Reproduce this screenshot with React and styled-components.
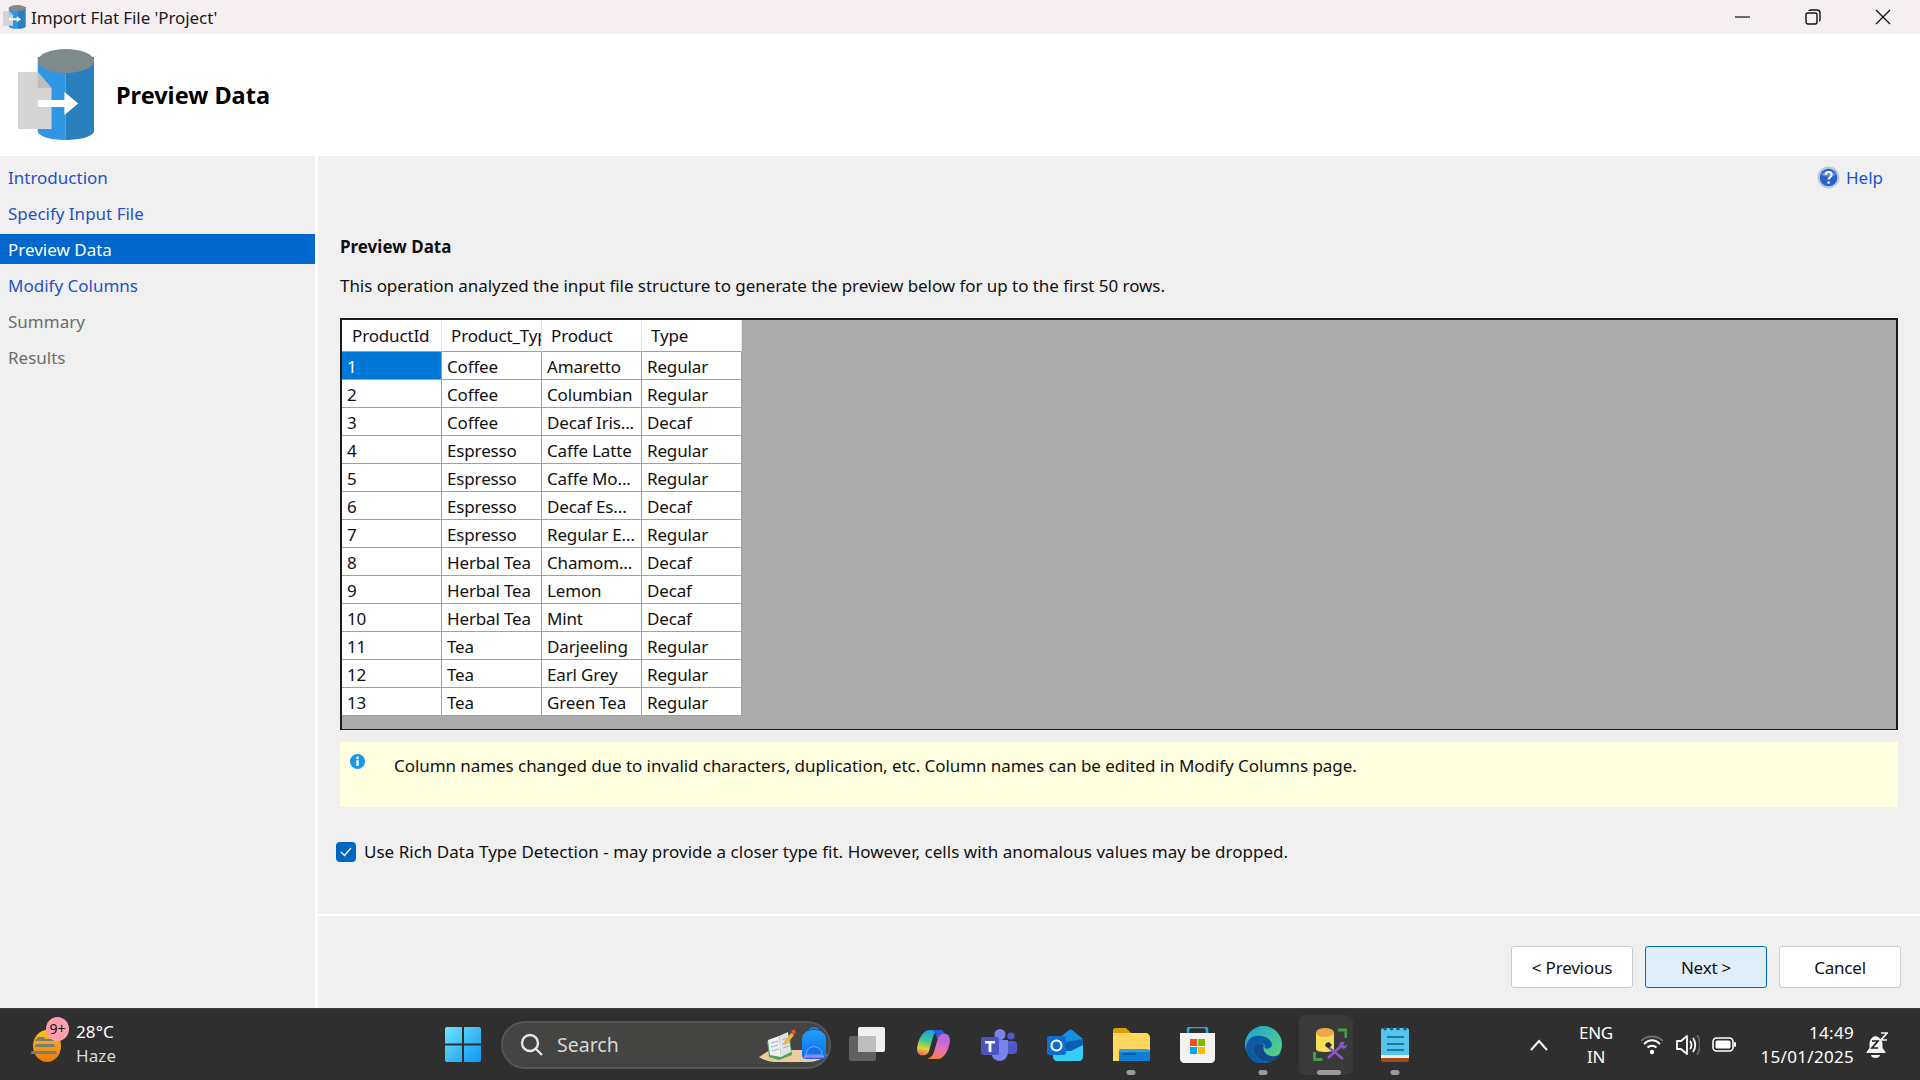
import React from "react";
import styled, { createGlobalStyle } from "styled-components";

const GlobalStyle = createGlobalStyle`
  html, body { margin: 0; padding: 0; background: #f0f0f0; }
  * { box-sizing: border-box; }
`;

const font = `"Noto Sans", "Open Sans", sans-serif`;

const Page = styled.div`
  width: 1920px;
  height: 1080px;
  display: flex;
  flex-direction: column;
  overflow: hidden;
  font-family: ${font};
  font-size: 17px;
  color: #111;
`;

const TitleBar = styled.div`
  height: 34px;
  background: #f6eff2;
  display: flex;
  align-items: center;
  padding-left: 3px;
  gap: 5px;
  font-size: 17px;
`;

const TitleText = styled.span`
  flex: 1;
  color: #1a1a1a;
  letter-spacing: -0.08px;
`;

const WindowButtons = styled.div`
  display: flex;
  align-items: center;
  gap: 54px;
  padding-right: 29px;
`;

const Header = styled.div`
  height: 122px;
  background: #fff;
  display: flex;
  align-items: center;
  padding-left: 18px;
  gap: 21px;
`;

const HeaderTitle = styled.h1`
  margin: 0 0 1px;
  font-size: 23.5px;
  font-weight: 700;
  color: #000;
`;

const Body = styled.div`
  flex: 1;
  display: flex;
  min-height: 0;
`;

const Sidebar = styled.nav`
  width: 318px;
  border-right: 3px solid #fff;
  background: #f0f0f0;
  display: flex;
  flex-direction: column;
  gap: 6px;
  padding-top: 6px;
`;

const NavItem = styled.div`
  height: 30px;
  display: flex;
  align-items: center;
  padding: 1px 0 0 8px;
  font-size: 17px;
  color: ${(p) => (p.$active ? "#fff" : p.$disabled ? "#6d6d6d" : "#2450c8")};
  background: ${(p) => (p.$active ? "#0067cc" : "transparent")};
`;

const Main = styled.main`
  flex: 1;
  display: flex;
  flex-direction: column;
  min-width: 0;
`;

const Content = styled.div`
  flex: 1;
  padding: 8px 22px 0;
  display: flex;
  flex-direction: column;
`;

const HelpRow = styled.div`
  display: flex;
  justify-content: flex-end;
  align-items: center;
  gap: 6px;
  height: 26px;
  padding-right: 15px;
  font-size: 17px;
  color: #1a55d0;
`;

const SectionTitle = styled.h2`
  margin: 45px 0 0;
  height: 24px;
  line-height: 24px;
  font-size: 17px;
  font-weight: 700;
  color: #111;
`;

const Description = styled.p`
  margin: 15px 0 0;
  height: 24px;
  line-height: 24px;
  font-size: 17px;
  letter-spacing: -0.055px;
  color: #111;
`;

const GridFrame = styled.div`
  margin-top: 20px;
  height: 412px;
  border: 2px solid #1c1c1c;
  border-bottom-width: 1px;
  background: #ababab;
  overflow: hidden;
`;

const Table = styled.table`
  border-collapse: separate;
  border-spacing: 0;
  table-layout: fixed;
  width: 400px;
  font-size: 17px;
  letter-spacing: -0.15px;
`;

const HeadCell = styled.th`
  width: 100px;
  height: 32px;
  padding: 0 0 0 9px;
  background: #fff;
  font-weight: 400;
  text-align: left;
  white-space: nowrap;
  overflow: hidden;
  border-right: 1px solid #e4e4e4;
  border-bottom: 1px solid #a0a0a0;

  &:first-child {
    padding-left: 10px;
  }
`;

const Cell = styled.td`
  width: 100px;
  height: 28px;
  padding: 1px 0 0 5px;
  background: ${(p) => (p.$selected ? "#0078d7" : "#fff")};
  color: ${(p) => (p.$selected ? "#fff" : "#111")};
  white-space: nowrap;
  overflow: hidden;
  border-right: 1px solid #a0a0a0;
  border-bottom: 1px solid #a0a0a0;
`;

const InfoBox = styled.div`
  margin-top: 12px;
  height: 65px;
  background: #ffffe0;
  display: flex;
  padding: 12px 0 0 10px;
  gap: 29px;
`;

const InfoText = styled.span`
  font-size: 17px;
  letter-spacing: -0.06px;
  line-height: 24px;
`;

const CheckRow = styled.label`
  margin: 33px 0 0 -4px;
  display: flex;
  align-items: center;
  gap: 8px;
  font-size: 17px;
  letter-spacing: 0.025px;
`;

const CheckBox = styled.span`
  width: 20px;
  height: 20px;
  border-radius: 4px;
  background: #0067c0;
  display: flex;
  align-items: center;
  justify-content: center;
`;

const Footer = styled.div`
  height: 94px;
  border-top: 2px solid #fff;
  display: flex;
  justify-content: flex-end;
  gap: 12px;
  padding: 30px 19px 0 0;
`;

const Button = styled.div`
  width: 122px;
  height: 42px;
  border-radius: 3px;
  border: 1px solid ${(p) => (p.$primary ? "#0067c0" : "#cccccc")};
  background: ${(p) => (p.$primary ? "#e0eef9" : "#fff")};
  display: flex;
  align-items: center;
  justify-content: center;
  font-size: 17px;
  letter-spacing: -0.2px;
  color: #111;
`;

const Taskbar = styled.footer`
  height: 72px;
  background: #302f2f;
  border-top: 1px solid #3c3c3c;
  display: flex;
  align-items: center;
  color: #fff;
  font-size: 17px;
`;

const Weather = styled.div`
  width: 430px;
  display: flex;
  align-items: center;
  padding-left: 29px;
`;

const WeatherIconWrap = styled.div`
  position: relative;
  width: 47px;
  height: 36px;
`;

const Badge = styled.span`
  position: absolute;
  left: 17px;
  top: -10px;
  width: 23px;
  height: 24px;
  border-radius: 50%;
  background: #ff9fae;
  color: #111;
  font-size: 14px;
  line-height: 24px;
  text-align: center;
`;

const WeatherText = styled.div`
  display: flex;
  flex-direction: column;
  line-height: 24px;
  font-size: 17px;
  margin-top: -2px;
  letter-spacing: 0.1px;
`;

const Muted = styled.span`
  color: #d8d8d8;
`;

const IconSlot = styled.div`
  position: relative;
  width: 66px;
  height: 60px;
  display: flex;
  align-items: center;
  justify-content: center;
  flex-shrink: 0;
`;

const ActiveSlot = styled(IconSlot)`
  width: 50px;
  margin: 0 13px 0 3px;
  padding-left: 12px;
  background: #3a3a3a;
  border-radius: 6px;
  box-shadow: 5px 0 0 -1px #393939;
`;

const RunDot = styled.span`
  position: absolute;
  bottom: 0;
  left: ${(p) => (p.$wide ? "60%" : "50%")};
  transform: translateX(-50%);
  width: ${(p) => (p.$wide ? "24px" : "9px")};
  height: 5px;
  border-radius: 3px;
  background: #9b9b9b;
`;

const SearchPill = styled.div`
  width: 330px;
  height: 48px;
  margin: 0 3px 0 5px;
  border-radius: 24px;
  background: #444443;
  border: 2px solid #565655;
  display: flex;
  align-items: center;
  padding-left: 17px;
  gap: 13px;
  flex-shrink: 0;
  color: #d8d8d8;
  font-size: 19.5px;
`;

const SearchLabel = styled.span`
  flex: 1;
`;

const Tray = styled.div`
  margin-left: 102px;
  display: flex;
  align-items: center;
`;

const Lang = styled.div`
  margin-left: 30px;
  width: 36px;
  display: flex;
  flex-direction: column;
  align-items: center;
  line-height: 24px;
  font-size: 17px;
  letter-spacing: -0.3px;
`;

const TrayIcons = styled.div`
  margin-left: 26px;
  display: flex;
  align-items: center;
  gap: 12px;
`;

const Clock = styled.div`
  margin-left: 14px;
  width: 104px;
  display: flex;
  flex-direction: column;
  align-items: flex-end;
  line-height: 24px;
  font-size: 17px;
  letter-spacing: 0.3px;
`;

const BellWrap = styled.div`
  margin-left: 12px;
  display: flex;
`;

function DbIcon({ width, height }) {
  return (
    <svg width={width} height={height} viewBox="0 0 78 92" preserveAspectRatio="none">
      <path d="M20 8 v74 c0 5 12 9 28 9 V8z" fill="#2e96e2" />
      <path d="M48 8 v83 c16 0 29-4 29-9 V8z" fill="#2980bd" />
      <ellipse cx="48.5" cy="12" rx="28.5" ry="12" fill="#7f8b8b" />
      <path d="M0 23 h20 l14 16 v41 H0z" fill="#d4d4d4" />
      <path d="M20 23 l14 16 H20z" fill="#bdbdbd" />
      <path d="M20 51 h27 v-8 l14 11.5 -14 11.5 v-8 H20z" fill="#fff" />
    </svg>
  );
}

function HelpIcon() {
  return (
    <svg width="23" height="23" viewBox="0 0 23 23">
      <circle cx="11.5" cy="11.5" r="11" fill="#b9c8e0" />
      <circle cx="11.5" cy="11.5" r="8.8" fill="#2a62c9" />
      <path d="M4 9 a8 6 0 0 1 15 0 a12 6 0 0 1 -15 0z" fill="#6f9ae6" opacity=".8" />
      <path d="M8.6 9 c0-4 6-4 6 0 c0 2.4-3 2.4-3 4.6" fill="none" stroke="#fff" strokeWidth="2" />
      <circle cx="11.6" cy="16.6" r="1.3" fill="#fff" />
    </svg>
  );
}

function InfoIcon() {
  return (
    <svg width="15" height="15" viewBox="0 0 15 15" style={{ flexShrink: 0 }}>
      <circle cx="7.5" cy="7.5" r="7.5" fill="#1b95e6" />
      <rect x="6.3" y="6.3" width="2.4" height="5.6" fill="#fff" />
      <circle cx="7.5" cy="4" r="1.4" fill="#fff" />
    </svg>
  );
}

function WeatherIcon() {
  return (
    <svg width="32" height="34" viewBox="0 0 32 34" style={{ position: "absolute", left: 2, top: 2 }}>
      <defs>
        <linearGradient id="sun" x1="0" y1="0" x2="0" y2="1">
          <stop offset="0" stopColor="#fbc21a" />
          <stop offset="1" stopColor="#ee7a0c" />
        </linearGradient>
      </defs>
      <ellipse cx="16" cy="17" rx="14" ry="16" fill="url(#sun)" />
      <g fill="#7b7b78">
        <rect x="6" y="8" width="8" height="3" rx="1.5" />
        <rect x="4" y="15" width="20" height="3" rx="1.5" />
        <rect x="0" y="22" width="26" height="3" rx="1.5" />
        <rect x="4" y="10" width="20" height="2" rx="1" />
      </g>
    </svg>
  );
}

function WinLogo() {
  return (
    <svg width="36" height="35" viewBox="0 0 36 35">
      <defs>
        <linearGradient id="win" x1="0" y1="0" x2="1" y2="1">
          <stop offset="0" stopColor="#6fe2fc" />
          <stop offset="1" stopColor="#0f97f2" />
        </linearGradient>
      </defs>
      <path d="M2 0 h15 v16.5 H0 V2 a2 2 0 0 1 2-2z M19 0 h15 a2 2 0 0 1 2 2 v14.5 H19z M0 18.5 h17 V35 H2 a2 2 0 0 1-2-2z M19 18.5 h17 V33 a2 2 0 0 1-2 2 H19z" fill="url(#win)" />
    </svg>
  );
}

function SearchGlass() {
  return (
    <svg width="24" height="24" viewBox="0 0 24 24" fill="none" stroke="#e6e6e6" strokeWidth="2.4">
      <circle cx="10" cy="10" r="8" />
      <path d="M16 16 l6 6" />
    </svg>
  );
}

function SchoolArt() {
  return (
    <svg width="70" height="36" viewBox="0 0 70 36">
      <defs>
        <linearGradient id="bag" x1="0" y1="0" x2="0" y2="1">
          <stop offset="0" stopColor="#22a0f8" />
          <stop offset="1" stopColor="#0b6cf0" />
        </linearGradient>
      </defs>
      <path d="M0 30 L11 23 H58 L68 28 C64 32 56 35 50 35 H16 C10 35 4 33 0 30z" fill="#eecb9c" />
      <path d="M8 14 L10 30 L20 33 L33 28 L31 11z" fill="#4aa35a" />
      <path d="M9 13 L20 9 L22 30 L11 28z" fill="#eef1f1" />
      <path d="M20 9 L29 5 L32 25 L22 30z" fill="#dfe3e8" />
      <g stroke="#a9b0b5" strokeWidth="1">
        <path d="M12 16 l7-2 M12 20 l7-2 M13 24 l7-2" />
        <path d="M23 13 l5-2 M23 17 l6-2 M24 21 l6-2" />
      </g>
      <path d="M25 15 L32 6 L35 8 L28 17 L24 18z" fill="#f2b33d" />
      <circle cx="34.5" cy="5" r="2.2" fill="#e8523a" />
      <path d="M43 28 V13 C43 6 48 3 55 3 s12 3 12 10 v15 c0 3-2 4-5 4 H48 c-3 0-5-1-5-4z" fill="url(#bag)" />
      <path d="M51 4 c0-4 8-4 8 0" fill="none" stroke="#1277ee" strokeWidth="2.5" />
      <path d="M47 28 c0-11 16-11 16 0z" fill="#1a6fe8" stroke="#7cc4ff" strokeWidth="0.8" />
      <path d="M45 29.5 h20" stroke="#a78bfa" strokeWidth="2.2" />
    </svg>
  );
}

function TaskViewIcon() {
  return (
    <svg width="36" height="35" viewBox="0 0 36 35">
      <rect x="0" y="9" width="27" height="25" rx="2" fill="#606060" />
      <rect x="9" y="0" width="27" height="25" rx="2" fill="#f0f0f0" />
      <rect x="9" y="9" width="18" height="16" rx="1" fill="#bdbdbd" />
    </svg>
  );
}

function CopilotIcon() {
  return (
    <svg width="33" height="31" viewBox="0 0 34 32">
      <defs>
        <linearGradient id="copA" x1="0.5" y1="0" x2="0.3" y2="1">
          <stop offset="0" stopColor="#1a9fe8" />
          <stop offset=".45" stopColor="#43c98a" />
          <stop offset=".75" stopColor="#e8d030" />
          <stop offset="1" stopColor="#e86a6a" />
        </linearGradient>
        <linearGradient id="copB" x1="0.6" y1="0" x2="0.4" y2="1">
          <stop offset="0" stopColor="#a869ea" />
          <stop offset=".6" stopColor="#e86dc0" />
          <stop offset="1" stopColor="#f9803a" />
        </linearGradient>
      </defs>
      <path d="M13 1 H24 C19 2 17 6 16 10 L12 24 C11 26 9 27 7 27 H5 C2 27 0 24 0 20 C1 11 6 1 13 1z" fill="url(#copA)" />
      <path d="M21 31 H10 C15 30 17 26 18 22 L22 8 C23 6 25 5 27 5 H29 C32 5 34 8 34 12 C33 21 28 31 21 31z" fill="url(#copB)" />
      <path d="M15 1 h9 c2 0 4 2 5 4 h-2 c-3 0-4 1-5 3 l-1 3 c-1-4-2-9-6-10z" fill="#2a5fdc" />
    </svg>
  );
}

function TeamsIcon() {
  return (
    <svg width="36" height="32" viewBox="0 0 36 32">
      <circle cx="19" cy="5.5" r="5.5" fill="#7b83eb" />
      <circle cx="30" cy="7" r="3.6" fill="#5059c9" />
      <rect x="25" y="12" width="11" height="13" rx="4" fill="#5059c9" />
      <path d="M10 11 h17 v12 c0 5-4 9-8.5 9 S10 28 10 23z" fill="#7b83eb" />
      <rect x="0" y="8" width="18" height="18" rx="2" fill="#4b53bc" />
      <path d="M4 12 h10 v2.4 h-3.6 V23 H7.6 v-8.6 H4z" fill="#fff" />
    </svg>
  );
}

function OutlookIcon() {
  return (
    <svg width="36" height="32" viewBox="0 0 36 32">
      <path d="M6 14 L22 1 c1-1 2-1 3 0 l11 9 v18 c0 2-2 4-4 4 H10 c-2 0-4-2-4-4z" fill="#1490df" />
      <path d="M14 14 L36 10 V18 L24 26 H14z" fill="#0a5fb4" />
      <path d="M6 22 L24 22 36 16 V28 c0 2-2 4-4 4 H10 c-2 0-4-2-4-4z" fill="#35cdf2" />
      <rect x="0" y="7" width="19" height="19" rx="2" fill="#0c6fd0" />
      <circle cx="9.5" cy="16.5" r="5" fill="none" stroke="#fff" strokeWidth="2.2" />
    </svg>
  );
}

function ExplorerIcon() {
  return (
    <svg width="37" height="33" viewBox="0 0 37 33">
      <path d="M0 2 c0-1 1-2 2-2 h11 l5 5 h-18z" fill="#d9a108" />
      <path d="M0 5 h33 c2 0 4 2 4 4 v24 H0z" fill="#ffd75e" />
      <path d="M6 22 h31 v11 H6z" fill="#0f7fd4" />
      <path d="M6 22 c0-1 1-1 2-1 h26 c2 0 3 1 3 3 H6z" fill="#2da0ea" />
      <rect x="10" y="25" width="13" height="2" fill="#0a5aa8" />
    </svg>
  );
}

function StoreIcon() {
  return (
    <svg width="35" height="36" viewBox="0 0 35 36">
      <path d="M8 8 V3 c0-2 1-3 3-3 h13 c2 0 3 1 3 3 v5" fill="none" stroke="#2aa7e0" strokeWidth="2.5" />
      <path d="M0 6 h35 v26 c0 2-2 4-4 4 H4 c-2 0-4-2-4-4z" fill="#f3f3f3" />
      <rect x="10" y="12" width="7" height="7" fill="#f25022" />
      <rect x="18" y="12" width="7" height="7" fill="#7fba00" />
      <rect x="10" y="20" width="7" height="7" fill="#00a4ef" />
      <rect x="18" y="20" width="7" height="7" fill="#ffb900" />
    </svg>
  );
}

function EdgeIcon() {
  return (
    <svg width="37" height="37" viewBox="0 0 37 37">
      <defs>
        <linearGradient id="edgeA" x1="0" y1="0" x2="1" y2="1">
          <stop offset="0" stopColor="#1c9fdc" />
          <stop offset="1" stopColor="#5fdc70" />
        </linearGradient>
      </defs>
      <circle cx="18.5" cy="18.5" r="18.5" fill="url(#edgeA)" />
      <path d="M1 22 C2 10 12 8 20 11 c6 2 9 8 5 11 c-3 2-7 0-5-3 C12 14 6 20 9 27 c2 5 8 9 15 9 C12 41 2 34 1 22z" fill="#0c59a4" />
      <path d="M24 36 c6-1 11-5 13-10 c-2 3-7 5-11 4 c-5-1-9-5-7-11 C12 14 6 20 9 27 c2 5 8 9 15 9z" fill="#114a8b" />
    </svg>
  );
}

function SsmsIcon() {
  return (
    <svg width="34" height="33" viewBox="0 0 34 33">
      <path d="M25 2 h8 v8" stroke="#3fa046" strokeWidth="3" fill="none" />
      <path d="M1.5 24 v7.5 h8" stroke="#3fa046" strokeWidth="3" fill="none" />
      <path d="M3 4 v17 c0 2 4 3 9 3 s9-1 9-3 V4z" fill="#f6de55" />
      <ellipse cx="12" cy="4.5" rx="9" ry="4.5" fill="#eda848" />
      <path d="M15 30 L29 17 M14 18 L30 31" stroke="#8a58c6" strokeWidth="2.6" />
      <path d="M27 19 c-2-4 1-6 5-5 l-2 3 2 1 2-2 c0 4-3 6-6 4z" fill="#8a58c6" />
      <path d="M13 15 l3-1 3 3 -3 3 -4-2z" fill="#2e2e2e" />
    </svg>
  );
}

function NotepadIcon() {
  return (
    <svg width="28" height="35" viewBox="0 0 28 35">
      <path d="M0 3 c0-1 1-2 2-2 h24 c1 0 2 1 2 2 v25 H0z" fill="#58c4ec" />
      <g fill="#14608c">
        <circle cx="4" cy="1.8" r="1.8" />
        <circle cx="10.5" cy="1.8" r="1.8" />
        <circle cx="17" cy="1.8" r="1.8" />
        <circle cx="24" cy="1.8" r="1.8" />
      </g>
      <path d="M6 10 h17 M6 17 h17 M6 23 h17" stroke="#0d7ea6" strokeWidth="2.2" />
      <rect x="0" y="28" width="28" height="3" fill="#ececec" />
      <path d="M0 31 h28 v2 c0 1-1 2-2 2 H2 c-1 0-2-1-2-2z" fill="#a14f14" />
    </svg>
  );
}

function Chevron() {
  return (
    <svg width="18" height="12" viewBox="0 0 18 12" fill="none" stroke="#fff" strokeWidth="2">
      <path d="M1 11 l8-9 8 9" />
    </svg>
  );
}

function WifiIcon() {
  return (
    <svg width="24" height="20" viewBox="0 0 24 20" fill="none" strokeWidth="2">
      <path d="M1 6 C7 0 17 0 23 6" stroke="#6d6d6d" />
      <path d="M4 9 C9 4 15 4 20 9" stroke="#fff" />
      <path d="M7.5 12.5 C10 10 14 10 16.5 12.5" stroke="#fff" />
      <circle cx="12" cy="17" r="2.2" fill="#fff" stroke="none" />
    </svg>
  );
}

function SpeakerIcon() {
  return (
    <svg width="24" height="24" viewBox="0 0 24 24" fill="none" strokeWidth="1.8">
      <path d="M1 8 h4 l6-5 v18 l-6-5 H1z" stroke="#fff" strokeLinejoin="round" />
      <path d="M14 8 c2 2 2 6 0 8" stroke="#fff" />
      <path d="M17 5 c3 4 3 10 0 14" stroke="#fff" />
      <path d="M21 2 c4 6 4 14 0 20" stroke="#666" />
    </svg>
  );
}

function BatteryIcon() {
  return (
    <svg width="24" height="15" viewBox="0 0 24 15">
      <rect x="1" y="1" width="20" height="13" rx="3.5" fill="none" stroke="#fff" strokeWidth="1.6" />
      <rect x="3.5" y="3.5" width="15" height="8" rx="1.5" fill="#fff" />
      <rect x="22" y="5" width="2" height="5" rx="1" fill="#fff" />
    </svg>
  );
}

function BellIcon() {
  return (
    <svg width="22" height="26" viewBox="0 0 22 26">
      <path d="M9.5 4 c-4 1-6 4-6 8 v4 l-3 4 v1 h19 v-1 l-3-4 v-4 c0-4-3-7-7-8z" fill="#f2f2f2" />
      <path d="M5 23 h9 c0 4-9 4-9 0z" fill="#f2f2f2" />
      <path d="M6 9 h6 l-6 7 h6" fill="none" stroke="#222" strokeWidth="1.7" />
      <path d="M15 1 h6 l-6 7 h6" fill="none" stroke="#f2f2f2" strokeWidth="1.7" />
    </svg>
  );
}

const navItems = [
  { label: "Introduction" },
  { label: "Specify Input File" },
  { label: "Preview Data", active: true },
  { label: "Modify Columns" },
  { label: "Summary", disabled: true },
  { label: "Results", disabled: true },
];

const rows = [
  ["1", "Coffee", "Amaretto", "Regular"],
  ["2", "Coffee", "Columbian", "Regular"],
  ["3", "Coffee", "Decaf Iris...", "Decaf"],
  ["4", "Espresso", "Caffe Latte", "Regular"],
  ["5", "Espresso", "Caffe Mo...", "Regular"],
  ["6", "Espresso", "Decaf Es...", "Decaf"],
  ["7", "Espresso", "Regular E...", "Regular"],
  ["8", "Herbal Tea", "Chamom...", "Decaf"],
  ["9", "Herbal Tea", "Lemon", "Decaf"],
  ["10", "Herbal Tea", "Mint", "Decaf"],
  ["11", "Tea", "Darjeeling", "Regular"],
  ["12", "Tea", "Earl Grey", "Regular"],
  ["13", "Tea", "Green Tea", "Regular"],
];

const columns = ["ProductId", "Product_Type", "Product", "Type"];

export default function App() {
  return (
    <Page>
      <GlobalStyle />
      <TitleBar>
        <DbIcon width={23} height={24} />
        <TitleText>Import Flat File 'Project'</TitleText>
        <WindowButtons>
          <svg width="16" height="16" viewBox="0 0 16 16" stroke="#111" strokeWidth="1.2">
            <path d="M0 8 h15" />
          </svg>
          <svg width="16" height="16" viewBox="0 0 16 16" fill="none" stroke="#111" strokeWidth="1.4">
            <rect x="1" y="4" width="11" height="11" rx="2" />
            <path d="M4 2 c0-1 1-1 2-1 h6 c2 0 3 1 3 3 v6 c0 1 0 2-1 2" />
          </svg>
          <svg width="16" height="16" viewBox="0 0 16 16" stroke="#111" strokeWidth="1.3">
            <path d="M1 1 l14 14 M15 1 L1 15" />
          </svg>
        </WindowButtons>
      </TitleBar>

      <Header>
        <DbIcon width={77} height={92} />
        <HeaderTitle>Preview Data</HeaderTitle>
      </Header>

      <Body>
        <Sidebar>
          {navItems.map((item) => (
            <NavItem key={item.label} $active={item.active} $disabled={item.disabled}>
              {item.label}
            </NavItem>
          ))}
        </Sidebar>
        <Main>
          <Content>
            <HelpRow>
              <HelpIcon />
              Help
            </HelpRow>
            <SectionTitle>Preview Data</SectionTitle>
            <Description>
              This operation analyzed the input file structure to generate the preview below for up to the first 50 rows.
            </Description>
            <GridFrame>
              <Table>
                <thead>
                  <tr>
                    {columns.map((c) => (
                      <HeadCell key={c}>{c}</HeadCell>
                    ))}
                  </tr>
                </thead>
                <tbody>
                  {rows.map((row, r) => (
                    <tr key={row[0]}>
                      {row.map((v, c) => (
                        <Cell key={c} $selected={r === 0 && c === 0}>
                          {v}
                        </Cell>
                      ))}
                    </tr>
                  ))}
                </tbody>
              </Table>
            </GridFrame>
            <InfoBox>
              <InfoIcon />
              <InfoText>
                Column names changed due to invalid characters, duplication, etc. Column names can be edited in Modify Columns page.
              </InfoText>
            </InfoBox>
            <CheckRow>
              <CheckBox>
                <svg width="12" height="10" viewBox="0 0 12 10" fill="none" stroke="#fff" strokeWidth="1.2">
                  <path d="M1 5 l3.5 3.5 L11 1" />
                </svg>
              </CheckBox>
              Use Rich Data Type Detection - may provide a closer type fit. However, cells with anomalous values may be dropped.
            </CheckRow>
          </Content>
          <Footer>
            <Button>&lt; Previous</Button>
            <Button $primary>Next &gt;</Button>
            <Button>Cancel</Button>
          </Footer>
        </Main>
      </Body>

      <Taskbar>
        <Weather>
          <WeatherIconWrap>
            <WeatherIcon />
            <Badge>9+</Badge>
          </WeatherIconWrap>
          <WeatherText>
            <span>28°C</span>
            <Muted>Haze</Muted>
          </WeatherText>
        </Weather>
        <IconSlot>
          <WinLogo />
        </IconSlot>
        <SearchPill>
          <SearchGlass />
          <SearchLabel>Search</SearchLabel>
          <SchoolArt />
        </SearchPill>
        <IconSlot>
          <TaskViewIcon />
        </IconSlot>
        <IconSlot>
          <CopilotIcon />
        </IconSlot>
        <IconSlot>
          <TeamsIcon />
        </IconSlot>
        <IconSlot>
          <OutlookIcon />
        </IconSlot>
        <IconSlot>
          <ExplorerIcon />
          <RunDot />
        </IconSlot>
        <IconSlot>
          <StoreIcon />
        </IconSlot>
        <IconSlot>
          <EdgeIcon />
          <RunDot />
        </IconSlot>
        <ActiveSlot>
          <SsmsIcon />
          <RunDot $wide />
        </ActiveSlot>
        <IconSlot>
          <NotepadIcon />
          <RunDot />
        </IconSlot>
        <Tray>
          <Chevron />
          <Lang>
            <span>ENG</span>
            <span>IN</span>
          </Lang>
          <TrayIcons>
            <WifiIcon />
            <SpeakerIcon />
            <BatteryIcon />
          </TrayIcons>
          <Clock>
            <span>14:49</span>
            <span>15/01/2025</span>
          </Clock>
          <BellWrap>
            <BellIcon />
          </BellWrap>
        </Tray>
      </Taskbar>
    </Page>
  );
}
